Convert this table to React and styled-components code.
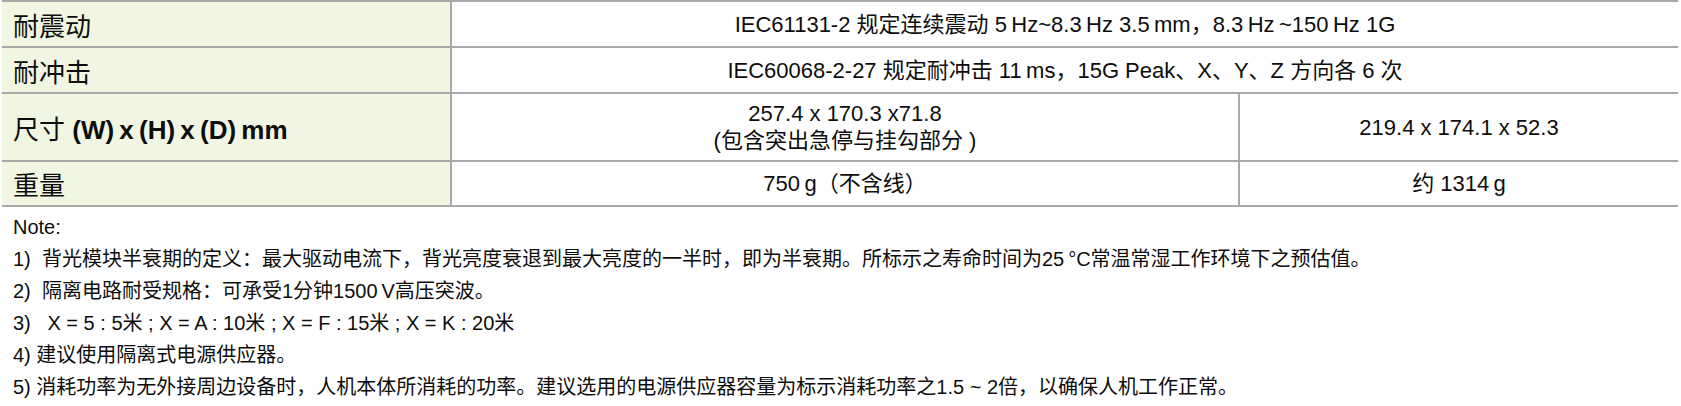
import React from 'react';
import styled, { createGlobalStyle } from 'styled-components';

const GlobalStyle = createGlobalStyle`
  html, body {
    margin: 0;
    padding: 0;
    background: #ffffff;
  }
  body {
    font-family: "Liberation Sans", Arial, "Noto Sans CJK SC", sans-serif;
    color: #0d0d0d;
  }
`;

const Page = styled.div`
  width: 1681px;
  display: flex;
  flex-direction: column;
`;

const Table = styled.table`
  width: 1676px;
  margin-left: 2px;
  border-collapse: collapse;
  table-layout: fixed;
`;

const Row = styled.tr`
  height: ${(p) => p.$h}px;
`;

const Label = styled.th`
  width: 449px;
  background: #f1f6e3;
  border-top: 2px solid #a9a9a9;
  border-bottom: 2px solid #a9a9a9;
  border-right: 2px solid #a9a9a9;
  padding: 0 0 0 11px;
  text-align: left;
  font-weight: normal;
  font-size: 26px;
  color: #0d0d0d;
  vertical-align: middle;
`;

const Bold = styled.span`
  font-weight: bold;
`;

const Value = styled.td`
  border-top: 2px solid #a9a9a9;
  border-bottom: 2px solid #a9a9a9;
  border-left: 2px solid #a9a9a9;
  text-align: center;
  font-size: 22px;
  line-height: 27px;
  vertical-align: middle;
  padding: 0 8px;
`;

const Notes = styled.div`
  padding: 4px 0 0 13px;
  font-size: 20px;
  line-height: 32px;
  color: #0d0d0d;
`;

const NoteLine = styled.div`
  white-space: pre;
`;

const notes = [
  'Note:',
  '1)  背光模块半衰期的定义：最大驱动电流下，背光亮度衰退到最大亮度的一半时，即为半衰期。所标示之寿命时间为25\u2009°C常温常湿工作环境下之预估值。',
  '2)  隔离电路耐受规格：可承受1分钟1500\u2009V高压突波。',
  '3)   X = 5 : 5米 ; X = A : 10米 ; X = F : 15米 ; X = K : 20米',
  '4) 建议使用隔离式电源供应器。',
  '5) 消耗功率为无外接周边设备时，人机本体所消耗的功率。建议选用的电源供应器容量为标示消耗功率之1.5 ~ 2倍，以确保人机工作正常。',
];

export default function App() {
  return (
    <Page>
      <GlobalStyle />
      <Table>
        <colgroup>
          <col style={{ width: 449 }} />
          <col style={{ width: 788 }} />
          <col />
        </colgroup>
        <tbody>
          <Row $h={46}>
            <Label>耐震动</Label>
            <Value colSpan={2}>
              IEC61131-2 规定连续震动 5{'\u2009'}Hz~8.3{'\u2009'}Hz 3.5{'\u2009'}mm，8.3{'\u2009'}Hz{'\u2009'}~150{'\u2009'}Hz 1G
            </Value>
          </Row>
          <Row $h={46}>
            <Label>耐冲击</Label>
            <Value colSpan={2}>
              IEC60068-2-27 规定耐冲击 11{'\u2009'}ms，15G Peak、X、Y、Z 方向各 6 次
            </Value>
          </Row>
          <Row $h={68}>
            <Label>
              尺寸 <Bold>(W){'\u2009'}x{'\u2009'}(H){'\u2009'}x{'\u2009'}(D){'\u2009'}mm</Bold>
            </Label>
            <Value>
              257.4 x 170.3 x71.8
              <br />
              (包含突出急停与挂勾部分 )
            </Value>
            <Value>219.4 x 174.1 x 52.3</Value>
          </Row>
          <Row $h={45}>
            <Label>重量</Label>
            <Value>750{'\u2009'}g（不含线）</Value>
            <Value>约 1314{'\u2009'}g</Value>
          </Row>
        </tbody>
      </Table>
      <Notes>
        {notes.map((n, i) => (
          <NoteLine key={i}>{n}</NoteLine>
        ))}
      </Notes>
    </Page>
  );
}
